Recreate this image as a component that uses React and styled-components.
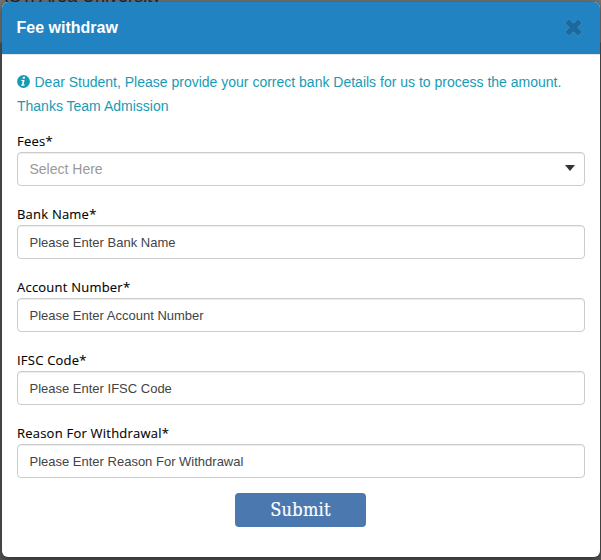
import React from "react";
import styled, { createGlobalStyle } from "styled-components";

const fields = [
  { label: "Bank Name*", placeholder: "Please Enter Bank Name" },
  { label: "Account Number*", placeholder: "Please Enter Account Number" },
  { label: "IFSC Code*", placeholder: "Please Enter IFSC Code" },
  { label: "Reason For Withdrawal*", placeholder: "Please Enter Reason For Withdrawal" },
];

export default function App() {
  return (
    <>
      <GlobalStyle />
      <Backdrop>
        <PageTitle aria-hidden="true">RST. Area University</PageTitle>
        <Modal>
          <Header>
            <Title>Fee withdraw</Title>
            <CloseButton type="button" aria-label="Close">
              <CloseIcon />
            </CloseButton>
          </Header>
          <Body>
            <Message>
              <InfoIcon />
              Dear Student, Please provide your correct bank Details for us to process the amount.
              <br />
              Thanks Team Admission
            </Message>
            <Field>
              <Label>Fees*</Label>
              <Select type="button">
                Select Here
                <Caret />
              </Select>
            </Field>
            {fields.map((field) => (
              <Field key={field.label}>
                <Label>{field.label}</Label>
                <Input placeholder={field.placeholder} />
              </Field>
            ))}
            <Submit type="button">Submit</Submit>
          </Body>
        </Modal>
      </Backdrop>
    </>
  );
}

function CloseIcon() {
  return (
    <svg width="19" height="19" viewBox="0 0 19 19">
      <path
        d="M5 .8 9.5 5.3 14 .8 18.2 5 13.7 9.5 18.2 14 14 18.2 9.5 13.7 5 18.2 .8 14 5.3 9.5 .8 5Z"
        fill="#1b699d"
        stroke="#3e90c5"
        strokeWidth="0.8"
      />
    </svg>
  );
}

function InfoIcon() {
  return (
    <InfoSvg width="13" height="13" viewBox="0 0 13 13">
      <circle cx="6.5" cy="6.5" r="6.4" fill="#179bb5" />
      <path d="M5.9 1.8h2.2l-.4 1.9H5.5ZM4.5 4.9h3.1L6.5 9.5h1.2l-.3 1.3H4.1l.3-1.3h.5l.8-3.4H4.2Z" fill="#fff" />
    </InfoSvg>
  );
}

const GlobalStyle = createGlobalStyle`
  * {
    box-sizing: border-box;
  }
  body {
    margin: 0;
    font-family: "Liberation Sans", Arial, sans-serif;
  }
`;

const Backdrop = styled.div`
  position: relative;
  height: 560px;
  padding: 2px 1px 3px 2px;
  overflow: hidden;
  background: linear-gradient(#757575 0, #757575 42px, #555 43px, #555 100%);
`;

const PageTitle = styled.div`
  position: absolute;
  top: -14px;
  left: -4px;
  font-size: 18px;
  line-height: 20px;
  white-space: nowrap;
  color: #1c2a38;
`;

const Modal = styled.div`
  position: relative;
  height: 555px;
  border-radius: 6px;
  overflow: hidden;
  background: #fff;
  box-shadow: 0 2px 8px rgba(0, 0, 0, 0.5);
`;

const Header = styled.div`
  display: flex;
  align-items: center;
  justify-content: space-between;
  height: 53px;
  padding: 0 17px 0 14.5px;
  background: #2283c3;
  border-bottom: 1px solid #e5e5e5;
`;

const Title = styled.h4`
  margin: 0;
  font-size: 16px;
  line-height: 24px;
  font-weight: 700;
  color: #fff;
`;

const CloseButton = styled.button`
  display: flex;
  padding: 0 0 2px;
  border: 0;
  background: none;
`;

const Body = styled.div`
  display: flex;
  flex-direction: column;
  padding: 15px;
`;

const Message = styled.p`
  margin: 0 0 13px;
  font-size: 14px;
  line-height: 24px;
  white-space: nowrap;
  color: #179bb5;
`;

const InfoSvg = styled.svg`
  margin-right: 4.5px;
  vertical-align: -1px;
`;

const Field = styled.div`
  height: 73px;
`;

const Label = styled.label`
  display: block;
  height: 21px;
  font-family: "Open Sans", "Noto Sans", sans-serif;
  font-size: 13px;
  font-weight: 500;
  letter-spacing: 0.22px;
  line-height: 21px;
  color: #000;
  -webkit-text-stroke: 0.1px #000;
`;

const Select = styled.button`
  display: flex;
  align-items: center;
  justify-content: space-between;
  width: 100%;
  height: 34px;
  padding: 0 9px 0 11.5px;
  border: 1px solid #ccc;
  border-radius: 4px;
  background: #fff;
  box-shadow: inset 0 1px 1px rgba(0, 0, 0, 0.075);
  font-family: inherit;
  font-size: 14px;
  color: #999;
`;

const Caret = styled.span`
  margin-top: -2px;
  border-top: 6px solid #333;
  border-left: 5.5px solid transparent;
  border-right: 5.5px solid transparent;
`;

const Input = styled.input`
  display: block;
  width: 100%;
  height: 34px;
  padding: 6px 11.5px;
  border: 1px solid #ccc;
  border-radius: 4px;
  box-shadow: inset 0 1px 1px rgba(0, 0, 0, 0.075);
  font-family: inherit;
  font-size: 13px;
  &::placeholder {
    color: #444;
    opacity: 1;
  }
`;

const Submit = styled.button`
  align-self: center;
  width: 131px;
  height: 34px;
  margin: -3px 1px 0 0;
  padding: 0 0 1px;
  border: 0;
  border-radius: 4px;
  background: #4b79af;
  font-family: "DejaVu Serif Condensed", "DejaVu Serif", serif;
  font-size: 18px;
  letter-spacing: 0.3px;
  color: #fff;
  -webkit-text-stroke: 0.2px #fff;
`;
